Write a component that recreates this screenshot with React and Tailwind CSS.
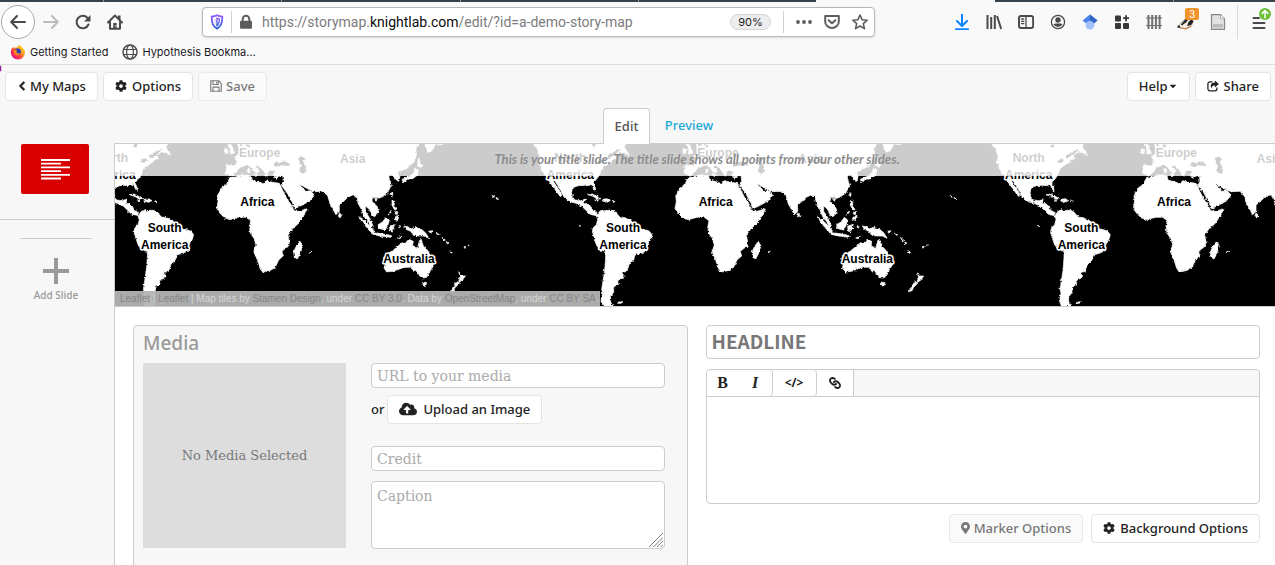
import React from 'react';
import { FaChevronLeft, FaCog, FaCloudUploadAlt, FaMapMarkerAlt, FaLink, FaCaretDown } from 'react-icons/fa';

const UI = "font-['Noto_Sans','Open_Sans',sans-serif]";
const SLAB = "font-['DejaVu_Serif',serif]";

const stroke = { fill: 'none', stroke: 'currentColor', strokeWidth: 2, strokeLinecap: 'round', strokeLinejoin: 'round' };

function ToolIcon({ label, children, className = '' }) {
  return (
    <button type="button" aria-label={label} className={`flex h-8 w-8 shrink-0 items-center justify-center text-[#4a4a4c] ${className}`}>
      {children}
    </button>
  );
}

function Ico({ children, className = 'size-4' }) {
  return <svg viewBox="0 0 16 16" className={className} aria-hidden="true">{children}</svg>;
}

function FirefoxLogo() {
  return (
    <svg viewBox="0 0 16 16" className="size-4" aria-hidden="true">
      <defs>
        <linearGradient id="fox" x1="0.9" y1="0.1" x2="0.2" y2="0.9">
          <stop offset="0" stopColor="#ffe226" />
          <stop offset="0.4" stopColor="#ff9a1f" />
          <stop offset="0.7" stopColor="#ff3b3f" />
          <stop offset="1" stopColor="#e31587" />
        </linearGradient>
      </defs>
      <path d="M9 .5c1.500 1 2.500 1.900 3 3 1.600.6 3 2.500 3 5A7 7 0 0 1 8 15.500 7 7 0 0 1 .8 8.500c0-2.300.8-4 1.700-5.200l.5 1.200L4.300 2.500l.5 1.600C6.500 3.500 8.500 3 9 .5Z" fill="url(#fox)" />
      <path d="M5.200 5.300C6.500 4 9.500 4 10.600 6c1 2-.2 5-2.900 5C5.500 11 4 9 5.200 5.300Z" fill="#2b3fb5" />
      <path d="M4 6.500c1-.8 2.600-.5 3.500.4L6.200 8c.6 1.400 2.600 1.500 3.700.8-.3 1.700-1.700 2.700-3.300 2.400C4.700 10.800 3.600 9 4 6.500Z" fill="#ff8a1c" />
    </svg>
  );
}

function BrowserChrome() {
  return (
    <header className="relative shrink-0 border-b border-[#dcdcdd] bg-[#f9f9fa] font-[Inter,sans-serif]">
      <div className="flex h-0.5 w-full">
        <div className="flex w-[64%] gap-px bg-[#8c9499]">
          <div className="w-[103px] bg-[#36414a]" /><div className="w-[177px] bg-[#36414a]" />
          <div className="w-[178px] bg-[#36414a]" /><div className="w-[177px] bg-[#36414a]" />
          <div className="flex-1 bg-[#36414a]" />
        </div>
        <div className="w-[14%]" />
        <div className="flex flex-1 gap-px bg-[#8c9499]">
          <div className="w-[178px] bg-[#36414a]" /><div className="flex-1 bg-[#36414a]" />
        </div>
      </div>
      <div className="flex h-10 items-center">
        <div className="flex items-center pl-px">
          <button type="button" aria-label="Back" className="flex size-[34px] items-center justify-center rounded-full border border-[#a9a9ab] bg-white text-[#4a4a4c]">
            <Ico><path {...stroke} d="M15 8H1.500M7 2 1.200 8 7 14" /></Ico>
          </button>
          <ToolIcon label="Forward" className="text-[#bcbcbd]!"><Ico><path {...stroke} d="M1 8h13.500M9 2l5.800 6L9 14" /></Ico></ToolIcon>
          <ToolIcon label="Reload">
            <Ico><path {...stroke} d="M13.500 10.500A6.200 6.200 0 1 1 12.500 4L14 5.700" /><path d="M15.500 1v6.500H9Z" fill="currentColor" /></Ico>
          </ToolIcon>
          <ToolIcon label="Home">
            <Ico><path {...stroke} d="M1 8.500 8 1.500l7 7M3 8v6.800h10V8" /><path d="M11 1.500h2.500V6L11 4ZM6.300 15V9h3.400v6Z" fill="currentColor" /><circle cx="8.800" cy="12" r=".7" fill="#fff" /></Ico>
          </ToolIcon>
        </div>
        <div className="mx-[71px] flex h-[30px] min-w-0 flex-1 items-center rounded border border-[#b8b8b9] bg-white pl-1.5 text-[#5c5c5e] shadow-sm">
          <svg viewBox="0 0 16 16" className="size-4 shrink-0" aria-hidden="true">
            <defs><linearGradient id="shield" x1="0" y1="0" x2="0" y2="1"><stop offset="0" stopColor="#9059ff" /><stop offset="1" stopColor="#2b5fe0" /></linearGradient></defs>
            <path d="M8 1.200c2 .9 3.700 1.200 5.300 1.400C13.500 8 12.500 12.300 8 14.700 3.500 12.300 2.500 8 2.700 2.600 4.300 2.400 6 2.100 8 1.200Z" fill="none" stroke="url(#shield)" strokeWidth="1.800" />
            <path d="M8 4.200c1 .5 1.700.6 2.400.7 0 3-.4 5.300-2.400 6.700Z" fill="none" stroke="url(#shield)" strokeWidth="1.300" />
            <path d="M8 4.200v7.500C6 10 5.500 7.500 5.500 4.900Z" fill="url(#shield)" opacity=".25" />
          </svg>
          <span className="ml-1.5 h-[22px] w-px shrink-0 bg-[#d0d0d1]" />
          <Ico className="ml-1.5 size-4 shrink-0"><rect x="2" y="6.700" width="12" height="8" rx="1.300" fill="currentColor" /><path d="M4.700 8V5a3.300 3.300 0 0 1 6.600 0v3" fill="none" stroke="currentColor" strokeWidth="2" /></Ico>
          <span className="ml-2 min-w-0 flex-1 truncate font-[Roboto,sans-serif] text-[14px] leading-5 text-[#7b7b7d]">https://storymap.<span className="text-[#0c0c0d]">knightlab.com</span>/edit/?id=a-demo-story-map</span>
          <span className="flex h-4 w-[41px] shrink-0 items-center justify-center rounded-full border border-[#d4d4d5] bg-[#ededf0] text-[11px] text-[#1c1c1e]">90%</span>
          <span className="ml-3 h-[22px] w-px shrink-0 bg-[#d0d0d1]" />
          <button type="button" aria-label="Page actions" className="ml-3 shrink-0"><Ico><circle cx="2" cy="8" r="1.900" fill="currentColor" /><circle cx="8" cy="8" r="1.900" fill="currentColor" /><circle cx="14" cy="8" r="1.900" fill="currentColor" /></Ico></button>
          <button type="button" aria-label="Save to Pocket" className="ml-3 shrink-0"><Ico><path {...stroke} d="M1.200 2h13.600v5.500a6.800 6.500 0 0 1-13.600 0ZM4.700 6.200 8 9.300l3.300-3.100" /></Ico></button>
          <button type="button" aria-label="Bookmark this page" className="ml-3 mr-1.5 shrink-0"><Ico><path {...stroke} strokeWidth="1.600" d="m8 1 2.100 4.700 5.100.5-3.900 3.400 1.200 5L8 12l-4.500 2.600 1.200-5L.8 6.200l5.100-.5Z" /></Ico></button>
        </div>
        <div className="flex items-center">
          <ToolIcon label="Downloads" className="text-[#0a84ff]!"><Ico><path {...stroke} d="M8 .5v11M3 7l5 5 5-5" /><path {...stroke} d="M2 15.200h12" /></Ico></ToolIcon>
          <ToolIcon label="Library"><Ico><path {...stroke} strokeLinecap="butt" d="M1.500 1v14M5.200 3v12M8.800 1v14" /><path {...stroke} strokeLinecap="butt" d="m11 2 4.200 13" /></Ico></ToolIcon>
          <ToolIcon label="Sidebars"><Ico><rect {...stroke} x="1" y="2" width="14.200" height="12" rx="2" /><path {...stroke} strokeWidth="1.300" d="M8 2v12M3.500 5h2.300M3.500 7.300h2.300M3.500 9.600h2.300" /></Ico></ToolIcon>
          <ToolIcon label="Account"><Ico><circle cx="8" cy="8" r="6.600" fill="none" stroke="currentColor" strokeWidth="1.300" /><circle cx="8" cy="6" r="2.700" fill="currentColor" /><path d="M3.500 10.300c1.500-.8 2.300-.8 4.500-.8s3 0 4.500.8A5 5 0 0 1 8 13a5 5 0 0 1-4.500-2.700Z" fill="currentColor" /></Ico></ToolIcon>
          <ToolIcon label="Scholar"><Ico><circle cx="8" cy="11" r="4.500" fill="#a3c2fb" /><path d="M8 .5.5 6.500 4 9.300C5 7.500 6.300 7 8 7s3 .5 4 2.300l3.500-2.800Z" fill="#4a82ec" /><path d="M8 .5 15.500 6.500 12 9.300C11 7.500 9.700 7 8 7Z" fill="#3464c4" /></Ico></ToolIcon>
          <ToolIcon label="Add-ons" className="text-[#38383a]!"><Ico><rect x="1" y="1.500" width="6" height="6" rx="1" fill="currentColor" /><rect x="1" y="9" width="6" height="6" rx="1" fill="currentColor" /><rect x="9" y="9" width="6" height="6" rx="1" fill="currentColor" /><path d="M12 1.200v6M9 4.200h6" stroke="currentColor" strokeWidth="1.800" /></Ico></ToolIcon>
          <ToolIcon label="Fence"><Ico className="size-4 text-[#6f6f70]"><path d="M2.500 1v14M6.200 1v14M9.900 1v14M13.600 1v14" stroke="currentColor" strokeWidth="2" /><path d="M0 4h16M0 11.500h16" stroke="currentColor" strokeWidth="1.200" /></Ico></ToolIcon>
          <ToolIcon label="Privacy Badger" className="relative">
            <svg viewBox="0 0 18 16" className="h-4 w-[18px]" aria-hidden="true"><path d="M1 12.500 5 8l6-5 5 4.500-1.500 4-5.500 3-5-.5Z" fill="#f4ede4" stroke="#7a5a3c" strokeWidth=".6" /><path d="M4 10.500 9.500 4l2.500-1-2 4.500L5 11.500ZM10 12l1.500-4 3-3 2 2.500-2.500 3.500Z" fill="#222" /><circle cx="1.800" cy="12.800" r="1.300" fill="#222" /><path d="m3 14 6 .8 5-2.300" stroke="#c9854d" strokeWidth="1.200" fill="none" /></svg>
            <span className="absolute left-[15px] top-[2px] flex h-3 w-[14px] items-center justify-center rounded-xs bg-[#f0932b] text-[10px] leading-3 text-white">3</span>
          </ToolIcon>
          <ToolIcon label="Reader"><Ico><path d="M1.500.7h9l4 4v10.600h-13Z" fill="#e2e2e3" stroke="#88888a" strokeWidth="1.200" /><path d="M10.500.7v4h4" fill="#fff" stroke="#99999a" strokeWidth=".8" /><rect x="3.500" y="10.800" width="9" height="2.200" fill="#c4c4c5" stroke="#a0a0a1" strokeWidth=".6" /></Ico></ToolIcon>
          <span className="ml-[3px] h-[34px] w-px bg-[#d9d9da]" />
          <ToolIcon label="Menu" className="relative ml-[5px]">
            <Ico className="mt-0.5 size-4"><path {...stroke} d="M2.500 3H8M2.500 8h11M2.500 13h11" /></Ico>
            <span className="absolute right-1 top-0.5 flex size-3 items-center justify-center rounded-full bg-[#6cbf36] text-white"><Ico className="size-2.5"><path {...stroke} strokeWidth="2.400" d="M8 14V3M3.500 7 8 2.500 12.500 7" /></Ico></span>
          </ToolIcon>
        </div>
      </div>
      <nav aria-label="Bookmarks" className="flex h-[22px] items-start pl-2.5 text-[11px] leading-5 text-[#1a1a1c]">
        <a href="#start" className="flex items-center gap-1"><FirefoxLogo />Getting Started</a>
        <a href="#bookmarklet" className="ml-3.5 flex items-center gap-1">
          <Ico className="size-4 text-[#4a4a4c]"><circle cx="8" cy="8" r="7" fill="none" stroke="currentColor" strokeWidth="1.500" /><ellipse cx="8" cy="8" rx="3.400" ry="7" fill="none" stroke="currentColor" strokeWidth="1.200" /><path d="M1.700 5.500h12.600M1.700 10.500h12.600" stroke="currentColor" strokeWidth="1.200" /></Ico>
          Hypothesis Bookma…
        </a>
      </nav>
      <span className="absolute -bottom-2 left-0 h-[7px] w-0.5 rounded-r-full border border-l-0 border-[#dcc9e0] bg-[#951c9c]" />
    </header>
  );
}

function Btn({ children, disabled, className = '' }) {
  return (
    <button
      type="button"
      disabled={disabled}
      className={`flex h-[29px] shrink-0 items-center whitespace-nowrap rounded border px-[11px] pb-px text-[13px] leading-5 font-medium ${disabled ? 'border-[#e9e9e9] bg-[#fafafa] text-[#777]' : 'border-[#e4e4e4] bg-white text-[#222]'} ${className}`}
    >
      {children}
    </button>
  );
}

function SaveIcon() {
  return <Ico className="mr-1 size-3"><path d="M1 1h10.500L15 4.500V15H1ZM4 1v5h7V1M4 15V9.500h8V15" fill="none" stroke="currentColor" strokeWidth="1.500" strokeLinejoin="round" /><path d="M8 2.300h1.500v2.400H8Z" fill="currentColor" /></Ico>;
}

function ShareIcon() {
  return <Ico className="mr-[5px] size-3"><path d="M7.500 2.500H4A2.700 2.700 0 0 0 1.200 5.200v6.600A2.700 2.700 0 0 0 4 14.500h6.500a2.700 2.700 0 0 0 2.700-2.700V10" fill="none" stroke="currentColor" strokeWidth="1.700" /><path d="m10.500.5 5.300 4.700-5.300 4.700V7.300C7.500 7.200 6 8 7 11.500 3.200 7.500 5 3.300 10.500 3.200Z" fill="currentColor" /></Ico>;
}

const LAND = [
  // North America
  'M203 30 222 42 237 56 244 80 241 95 247 110 253 128 266 142 274 156 284 170 294 184 306 200 311 196 303 182 294 168 284 152 288 150 298 166 308 184 316 200 336 216 352 220 370 228 382 240 394 252 412 257 416 248 402 241 398 230 386 220 376 222 382 207 366 212 350 210 342 200 340 184 346 172 360 167 378 166 390 167 400 163 407 178 412 184 411 172 405 158 414 148 424 135 429 118 440 108 456 98 466 88 476 86 470 76 484 66 498 68 512 76 506 62 500 56 500 30Z',
  // Caribbean
  'M388 194 402 192 416 199 428 206 418 208 404 199ZM434 208 446 206 456 212 446 217 432 213ZM412 210 420 211 418 214ZM462 212 470 213 468 216Z',
  // South America
  'M414 258 424 244 436 239 440 247 447 241 460 241 472 246 484 261 500 263 518 271 528 288 544 296 556 298 572 303 581 314 576 330 567 345 566 362 548 370 530 375 526 390 512 404 506 424 490 428 498 438 494 444 478 452 480 462 466 474 466 488 456 500 456 514 464 528 434 528 428 512 433 490 430 478 436 440 440 410 442 380 442 364 424 360 412 340 408 324 402 308 404 294 414 284 418 268Z',
  // Africa
  'M690 142 706 141 728 134 751 137 754 150 776 156 790 161 798 152 818 157 838 160 850 185 860 205 874 225 882 242 896 244 922 236 912 256 896 280 876 298 864 316 868 335 866 348 846 364 850 378 836 390 826 412 812 421 788 427 780 415 772 390 761 365 768 345 762 325 751 310 748 290 752 272 738 262 716 262 690 269 674 264 660 250 650 236 654 214 652 198 662 176 680 162Z',
  // Madagascar
  'M900 334 908 348 900 372 892 387 883 382 881 366 888 350Z',
  // Europe and Asia
  'M712 30 716 54 728 64 712 74 704 80 712 92 706 108 680 105 678 130 696 138 708 128 720 112 742 104 754 112 764 126 772 130 778 122 764 108 774 106 790 122 798 137 804 138 804 126 812 120 828 124 818 134 832 140 848 136 850 154 844 166 862 190 878 220 884 236 906 226 930 212 943 196 932 182 918 184 904 170 896 160 908 168 926 178 944 185 970 184 984 200 990 222 1008 254 1018 244 1018 226 1044 202 1060 194 1072 206 1074 220 1084 238 1094 262 1106 276 1112 292 1120 290 1110 266 1096 244 1096 228 1108 238 1116 256 1124 260 1136 248 1132 230 1116 214 1118 202 1140 204 1162 190 1174 166 1168 148 1166 134 1178 134 1186 150 1196 154 1200 138 1190 128 1206 122 1224 112 1242 96 1250 74 1246 54 1256 44 1258 30Z',
  // British Isles
  'M682 42 694 44 700 58 704 70 690 72 692 60ZM674 56 684 58 682 70 674 70Z',
  // Mediterranean islands
  'M744 116 750 118 748 130 742 128ZM760 132 772 134 768 140ZM822 140 834 141 830 145Z',
  // Kamchatka and the north Pacific
  'M1268 30 1276 48 1284 68 1298 60 1306 42 1330 44 1340 30Z',
  // Japan
  'M1256 82 1262 104 1270 106 1262 112 1252 108ZM1246 114 1256 118 1252 136 1238 146 1222 148 1210 158 1206 148 1224 140 1240 132Z',
  // Philippines
  'M1176 212 1184 214 1182 228 1190 238 1184 240 1176 226ZM1188 244 1194 246 1190 256 1184 250ZM1184 262 1196 256 1194 272 1182 268ZM1164 256 1174 240 1172 248Z',
  // Taiwan, Hainan, Sri Lanka
  'M1174 188 1179 190 1176 200 1172 196ZM1122 206 1132 206 1128 214ZM1018 248 1025 256 1020 264 1015 256Z',
  // Sumatra and Java
  'M1076 260 1090 268 1108 286 1122 302 1120 310 1108 302 1092 282ZM1118 308 1136 310 1162 314 1176 318 1172 322 1140 318 1118 313Z',
  // Borneo, Sulawesi, Timor
  'M1134 284 1148 276 1158 262 1168 270 1164 284 1156 300 1138 296ZM1168 288 1186 284 1178 290 1186 296 1176 298 1178 306 1170 304ZM1192 324 1206 318 1200 326ZM1198 286 1202 294 1196 292Z',
  // New Guinea and the Solomon Islands
  'M1212 288 1224 290 1232 297 1246 292 1264 298 1276 308 1288 326 1272 318 1256 318 1240 316 1232 304 1218 298ZM1286 304 1298 302 1292 310ZM1308 308 1318 314 1314 316ZM1326 322 1336 330 1332 332ZM1338 334 1346 340 1342 342Z',
  // Australia
  'M1150 385 1156 374 1178 362 1192 350 1206 338 1216 340 1226 328 1240 334 1238 346 1252 356 1258 332 1264 328 1270 348 1284 362 1290 376 1302 390 1304 402 1290 424 1280 442 1268 444 1254 434 1248 420 1240 424 1234 412 1216 412 1200 416 1180 424 1160 426 1152 414 1156 400Z',
  // Tasmania and New Zealand
  'M1268 456 1280 458 1276 470 1270 466ZM1376 428 1386 438 1396 438 1388 450 1376 458 1378 446 1382 440ZM1370 454 1378 460 1366 472 1360 484 1352 484 1360 470Z',
  // Pacific specks
  'M1350 362 1358 370 1352 368ZM1392 350 1398 350 1394 355ZM1404 346 1410 344 1408 348ZM1476 196 1484 200 1480 202ZM1488 202 1496 208 1490 208ZM928 366 936 364 930 368ZM1738 286 1742 288 1738 290ZM480 516 494 515 488 520 478 520Z',
].join('');

const SEAS = [
  // Black Sea, Caspian Sea
  'M820 106 826 96 840 98 852 94 870 102 866 108 844 106 830 110ZM894 84 908 80 916 88 908 96 916 108 920 126 908 132 898 122 904 108Z',
  // Great Lakes, Hudson Bay, Saint Lawrence, Baltic
  'M400 42 412 42 410 54 402 50ZM420 94 436 84 442 90 432 100ZM446 78 472 62 488 56 470 74 450 86ZM736 42 750 46 744 54ZM718 40 728 42 724 54Z',
].join('');

const LABELS = [
  ['North', 336, 96], ['America', 336, 148], ['Europe', 779, 82], ['Asia', 1058, 98],
  ['Africa', 772, 228], ['South', 494, 306], ['America', 494, 357], ['Australia', 1227, 398],
];

const WORLDS = [0, 1375, 2750];

function WorldMap() {
  return (
    <svg viewBox="345 42 3480 486" preserveAspectRatio="xMinYMin slice" className="h-full w-full bg-black" role="img" aria-label="World map">
      <filter id="coast" filterUnits="userSpaceOnUse" x="300" y="0" width="3600" height="560">
        <feTurbulence type="fractalNoise" baseFrequency="0.15" numOctaves="2" seed="4" />
        <feDisplacementMap in="SourceGraphic" scale="9" xChannelSelector="R" yChannelSelector="G" />
      </filter>
      <g filter="url(#coast)">
        {WORLDS.map((dx) => (
          <g key={dx} transform={`translate(${dx} 0)`}>
            <path d={LAND} fill="#fff" stroke="#fff" strokeWidth="2" strokeLinejoin="round" />
            <path d={SEAS} fill="#000" />
          </g>
        ))}
      </g>
      <g fontFamily="Liberation Sans, Arial, sans-serif" fontSize="36" fontWeight="700" textAnchor="middle" fill="#000" stroke="#fff" strokeWidth="9" strokeLinejoin="round" paintOrder="stroke">
        {WORLDS.flatMap((dx) => LABELS.map(([name, x, y]) => (
          x + dx < 3860 && <text key={`${dx}-${y}`} x={x + dx} y={y}>{name}</text>
        )))}
      </g>
    </svg>
  );
}

function MapPane() {
  return (
    <section className="relative h-[163px] shrink-0 border-b border-[#ccc]">
      <WorldMap />
      <p className="absolute inset-x-0 top-0 flex h-8 items-center justify-center bg-white/80 pl-1 font-[Lato,sans-serif] text-[13px] font-bold italic text-[#8c8c8c]">
        This is your title slide. The title slide shows all points from your other slides.
      </p>
      <p className="absolute bottom-0 left-0 h-[15px] whitespace-nowrap bg-[#b4b4b4]/95 pl-[5px] pr-px font-['Liberation_Sans',Arial,sans-serif] text-[10px] leading-[15px] text-[#d6d6d6]">
        <a href="#leaflet" className="text-[#868686]">Leaflet</a> | <a href="#leaflet" className="text-[#868686]">Leaflet</a> | Map tiles by <a href="#stamen" className="text-[#868686]">Stamen Design</a>, under <a href="#ccby" className="text-[#868686]">CC BY 3.0</a>. Data by <a href="#osm" className="text-[#868686]">OpenStreetMap</a>, under <a href="#ccbysa" className="text-[#868686]">CC BY SA</a>.
      </p>
    </section>
  );
}

function Sidebar() {
  return (
    <aside className="w-[114px] shrink-0">
      <div className="border-b border-[#ccc] pb-[25px] pl-[21px] pt-px">
        <button type="button" aria-label="Title slide" className="flex h-[50px] w-[68px] items-center justify-center rounded-xs bg-[#d90000]">
          <svg viewBox="0 0 29 21" className="h-[21px] w-[29px]" aria-hidden="true"><path d="M0 1h29M0 4.700h20M0 8.400h29M0 12.100h20M0 15.800h29M0 19.500h20" stroke="#fff" strokeWidth="1.800" /></svg>
        </button>
      </div>
      <div className="ml-5 mr-[22px] mt-[18px] border-t border-[#ccc] pt-[19px]">
        <button type="button" className={`flex w-full flex-col items-center text-[#999] ${UI}`}>
          <svg viewBox="0 0 26 26" className="size-[26px]" aria-hidden="true"><path d="M13 0v26M0 13h26" stroke="currentColor" strokeWidth="4" /></svg>
          <span className="text-[10px] leading-[22px] font-medium">Add Slide</span>
        </button>
      </div>
    </aside>
  );
}

const FIELD = 'block w-full rounded border border-[#ccc] bg-white px-[5px] text-[14px] placeholder:text-[#aaa] outline-none';

function MediaPanel() {
  return (
    <section className="rounded border border-[#ccc] bg-[#f7f7f7] px-[9px] pb-12 pt-1">
      <h2 className={`h-[33px] text-[19px] leading-[26px] font-medium text-[#999] ${UI}`}>Media</h2>
      <div className="flex gap-[25px] pr-[13px]">
        <div className={`flex h-[185px] w-[203px] shrink-0 items-center justify-center bg-[#ddd] text-[13px] text-[#777] ${SLAB}`}>No Media Selected</div>
        <div className="min-w-0 flex-1">
          <input aria-label="URL to your media" placeholder="URL to your media" className={`h-[25px] ${FIELD} ${SLAB}`} />
          <div className={`mt-[7px] flex items-center gap-[3px] text-[13px] font-medium text-[#222] ${UI}`}>
            or
            <Btn><FaCloudUploadAlt className="mr-1.5 size-[18px]" />Upload an Image</Btn>
          </div>
          <input aria-label="Credit" placeholder="Credit" className={`mt-[22px] h-[25px] ${FIELD} ${SLAB}`} />
          <div className="relative mt-2.5">
            <textarea aria-label="Caption" placeholder="Caption" className={`h-[68px] resize-none py-1 leading-5 ${FIELD} ${SLAB}`} />
            <svg viewBox="0 0 14 14" className="absolute bottom-0.5 right-0.5 size-[14px]" aria-hidden="true"><path d="M0 14 14 0M4.500 14 14 4.500M8 14l6-6M11.500 14 14 11.500" stroke="#777" strokeWidth="1" /></svg>
          </div>
        </div>
      </div>
    </section>
  );
}

function TextPanel() {
  return (
    <section>
      <input aria-label="Headline" placeholder="HEADLINE" className="block h-[34px] w-full rounded border border-[#ccc] bg-white px-[5px] pb-1 font-['Noto_Sans_CJK_SC',sans-serif] text-[19px] font-bold outline-none placeholder:text-[#777]" />
      <div className="mt-2.5 rounded border border-[#ccc] bg-white">
        <div className="flex h-[27px] overflow-hidden rounded-t border-b border-[#ccc] bg-[#f7f7f7] text-[#222]">
          <div className="flex rounded-r border-r border-[#ccc] bg-white font-['Liberation_Serif',serif] text-[16px] font-bold">
            <button type="button" aria-label="Bold" className="w-8">B</button>
            <button type="button" aria-label="Italic" className="w-[33px] italic">I</button>
          </div>
          <button type="button" aria-label="HTML source" className={`w-11 rounded-r border-r border-[#ccc] bg-white text-[12px] font-bold ${UI}`}>&lt;/&gt;</button>
          <button type="button" aria-label="Link" className="flex w-[37px] items-center justify-center border-r border-[#ccc] bg-white"><FaLink className="size-3 rotate-90" /></button>
        </div>
        <textarea aria-label="Slide text" className={`block h-[106px] w-full resize-none bg-transparent p-2 text-[13px] outline-none ${SLAB}`} />
      </div>
      <div className="mt-2.5 flex justify-end gap-2">
        <Btn disabled><FaMapMarkerAlt className="mr-0.5 h-3 w-[9px]" preserveAspectRatio="none" /><span className="pl-0.5">Marker Options</span></Btn>
        <Btn><FaCog className="mr-[5px] size-3" />Background Options</Btn>
      </div>
    </section>
  );
}

export default function App() {
  return (
    <div className={`flex h-screen flex-col overflow-hidden bg-[#f7f7f7] ${UI}`}>
      <BrowserChrome />
      <div className="flex h-[43px] shrink-0 items-center gap-[5px] pl-[5px] pr-1">
        <Btn><FaChevronLeft className="mr-[3px] size-2.5 stroke-current stroke-[40]" />My Maps</Btn>
        <Btn><FaCog className="mr-[5px] size-3" />Options</Btn>
        <Btn disabled><SaveIcon />Save</Btn>
        <Btn className="ml-auto">Help<FaCaretDown className="size-2.5" /></Btn>
        <Btn><ShareIcon />Share</Btn>
      </div>
      <nav aria-label="View" className="relative z-10 -mb-px flex h-9 shrink-0 justify-center pl-14 text-[13px] font-medium">
        <a href="#edit" className="flex w-[47px] items-center justify-center rounded-t border border-b-0 border-[#ccc] bg-white text-[#555]">Edit</a>
        <a href="#preview" className="flex w-[78px] items-center justify-center text-[#1aa8d4]">Preview</a>
      </nav>
      <div className="flex min-h-0 flex-1">
        <Sidebar />
        <main className="flex min-w-0 flex-1 flex-col border-l border-t border-[#ccc] bg-white">
          <MapPane />
          <div className="grid grid-cols-2 items-start gap-[18px] pl-[18px] pr-[15px] pt-[18px]">
            <MediaPanel />
            <TextPanel />
          </div>
        </main>
      </div>
    </div>
  );
}
